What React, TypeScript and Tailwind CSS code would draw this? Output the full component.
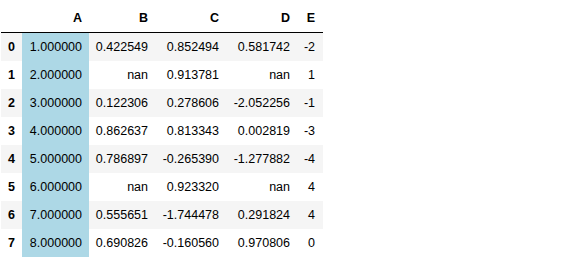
const columns = ['A', 'B', 'C', 'D', 'E'];

const rows: string[][] = [
  ['1.000000', '0.422549', '0.852494', '0.581742', '-2'],
  ['2.000000', 'nan', '0.913781', 'nan', '1'],
  ['3.000000', '0.122306', '0.278606', '-2.052256', '-1'],
  ['4.000000', '0.862637', '0.813343', '0.002819', '-3'],
  ['5.000000', '0.786897', '-0.265390', '-1.277882', '-4'],
  ['6.000000', 'nan', '0.923320', 'nan', '4'],
  ['7.000000', '0.555651', '-1.744478', '0.291824', '4'],
  ['8.000000', '0.690826', '-0.160560', '0.970806', '0'],
];

// fixed column widths so the right edges line up with the notebook render
const widths = ['w-[67px]', 'w-[66px]', 'w-[71px]', 'w-[71px]', 'w-[26px]'];
const pads = ['pr-[7px]', 'pr-[7px]', 'pr-[7px]', 'pr-[7px]', 'pr-[8px]'];

export default function App() {
  return (
    <div className="w-[582px] h-[270px] bg-white pt-1 pl-px font-['Liberation_Sans',Arial,sans-serif] text-[12.5px] text-black">
      <table className="border-separate border-spacing-0 table-fixed">
        <thead>
          <tr>
            <th className="w-[21px] h-[29px] border-b border-black"></th>
            {columns.map((c, i) => (
              <th
                key={c}
                className={`${widths[i]} ${pads[i]} h-[29px] border-b border-black text-right font-bold`}
              >
                {c}
              </th>
            ))}
          </tr>
        </thead>
        <tbody>
          {rows.map((row, r) => (
            <tr key={r} className={r % 2 === 0 ? 'bg-[#f5f5f5]' : 'bg-white'}>
              <th className="h-[28px] pr-[7px] text-right font-bold">{r}</th>
              {row.map((v, i) => (
                <td
                  key={i}
                  className={`h-[28px] ${pads[i]} text-right ${i === 0 ? 'bg-[#add8e6]' : ''}`}
                >
                  {v}
                </td>
              ))}
            </tr>
          ))}
        </tbody>
      </table>
    </div>
  );
}
